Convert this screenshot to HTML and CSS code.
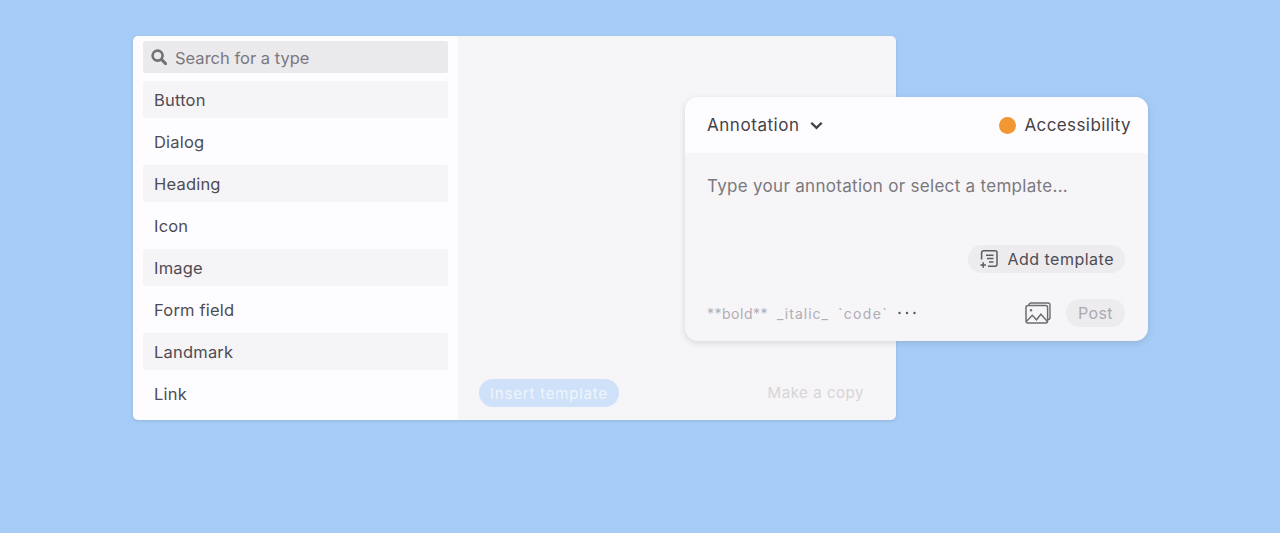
FILE: index.html
```html
<!DOCTYPE html>
<html lang="en">
<head>
<meta charset="utf-8">
<title>Annotation</title>
<link rel="stylesheet" href="styles.css">
</head>
<body>
<main class="stage">
  <section class="panel">
    <div class="types">
      <div class="search">
        <svg class="search-icon" viewBox="0 0 16 16" width="16" height="16" aria-hidden="true"><circle cx="6.6" cy="6.6" r="5" fill="none" stroke="#6f6e75" stroke-width="2.6"/><path d="M10.6 10.6 14.6 14.6" stroke="#6f6e75" stroke-width="3" stroke-linecap="round"/></svg>
        <span>Search for a type</span>
      </div>
      <ul class="type-list">
        <li class="type shaded">Button</li>
        <li class="type">Dialog</li>
        <li class="type shaded">Heading</li>
        <li class="type">Icon</li>
        <li class="type shaded">Image</li>
        <li class="type">Form field</li>
        <li class="type shaded">Landmark</li>
        <li class="type">Link</li>
      </ul>
    </div>
    <div class="preview">
      <span class="insert">Insert template</span>
      <span class="copy">Make a copy</span>
    </div>
  </section>

  <section class="card">
    <header class="card-head">
      <div class="kind">
        <span>Annotation</span>
        <svg viewBox="0 0 12 8" width="13" height="9" aria-hidden="true"><path d="M1.2 1.4 6 6.2l4.8-4.8" fill="none" stroke="#3d3c42" stroke-width="2.1"/></svg>
      </div>
      <div class="category"><i class="dot"></i><span>Accessibility</span></div>
    </header>
    <div class="card-body">
      <p class="placeholder">Type your annotation or select a template...</p>
      <div class="template-row">
        <span class="add-template">
          <svg viewBox="0 0 20 20" width="20" height="20" aria-hidden="true"><path d="M2.6 10.5V3.8a2 2 0 0 1 2-2h11.4a2 2 0 0 1 2 2v11.4a2 2 0 0 1-2 2H9" fill="none" stroke="#5a5960" stroke-width="1.5"/><path d="M7 6.2h7.5M8 9.6h6.5M10 13h4.5M4.2 13.2v5.6M1.4 16h5.6" fill="none" stroke="#5a5960" stroke-width="1.5"/></svg>
          <span>Add template</span>
        </span>
      </div>
      <div class="card-foot">
        <div class="markup">
          <span class="md-bold">**bold**</span><span class="md-italic">_italic_</span><span class="md-code">`code`</span>
          <svg viewBox="0 0 20 4" width="20" height="4" aria-hidden="true"><circle cx="2.5" cy="2" r="1.2" fill="#55545a"/><circle cx="10" cy="2" r="1.2" fill="#55545a"/><circle cx="17.5" cy="2" r="1.2" fill="#55545a"/></svg>
        </div>
        <div class="actions">
          <svg viewBox="0 0 26 22" width="26" height="22" aria-hidden="true"><path d="M4 3.2V3a2 2 0 0 1 2-2h17a2 2 0 0 1 2 2v12.5a2 2 0 0 1-2 2h-.3" fill="none" stroke="#6b6a71" stroke-width="1.4"/><rect x="1" y="3.6" width="21.6" height="17.4" rx="2" fill="none" stroke="#6b6a71" stroke-width="1.5"/><circle cx="6" cy="8.2" r="1.2" fill="#6b6a71"/><path d="M1.3 19.5 7.3 13.2l4.2 4.6 4.4-5.6 6.5 7.3" fill="none" stroke="#6b6a71" stroke-width="1.4"/></svg>
          <span class="post">Post</span>
        </div>
      </div>
    </div>
  </section>
</main>
</body>
</html>
```
FILE: styles.css
```css
* { box-sizing: border-box; }
html, body { margin: 0; height: 100%; }
body {
  background: #a4ccf7;
  font-family: Inter, "Liberation Sans", sans-serif;
  color: #3f3e44;
  overflow: hidden;
}
.stage {
  position: relative;
  width: 1280px;
  height: 533px;
  padding: 36px 384px 0 133px;
}
.stage::after {
  content: "";
  position: absolute;
  inset: 0;
  pointer-events: none;
  background: repeating-conic-gradient(rgba(255, 255, 255, .04) 0 25%, rgba(90, 80, 110, .012) 0 50%) 0 0 / 2px 2px;
}
.panel {
  display: flex;
  width: 763px;
  height: 384px;
  border-radius: 5px;
  overflow: hidden;
  box-shadow: 0 1px 3px rgba(60, 80, 120, .18);
}
.types {
  width: 325px;
  padding: 5px 10px 0;
  background: #fefdff;
}
.search {
  display: flex;
  align-items: center;
  gap: 8px;
  height: 32px;
  padding: 1px 8px 0;
  border-radius: 2px;
  background: #ebeaec;
  font-size: 16.5px;
  color: #77767c;
}
.search-icon { flex: none; margin-top: -1px; }
.type-list {
  list-style: none;
  margin: 8px 0 0;
  padding: 0;
  display: flex;
  flex-direction: column;
  gap: 5px;
}
.type {
  height: 37px;
  padding: 0 11px;
  display: flex;
  align-items: center;
  border-radius: 2px;
  font-size: 16.5px;
  letter-spacing: .2px;
  color: #4a494f;
}
.shaded { background: #f6f5f7; }
.preview {
  flex: 1;
  display: flex;
  align-items: flex-end;
  justify-content: space-between;
  padding: 0 32px 13px 21px;
  background: #f7f6f8;
}
.insert {
  display: flex;
  align-items: center;
  height: 28px;
  padding: 0 11px;
  border-radius: 14px;
  background: #cfe2fa;
  color: #f1f6fd;
  font-size: 15px;
  letter-spacing: .8px;
}
.copy {
  height: 28px;
  line-height: 28px;
  font-size: 15px;
  letter-spacing: .55px;
  color: #d6d5d9;
}
.card {
  position: absolute;
  left: 685px;
  top: 97px;
  width: 463px;
  height: 244px;
  border-radius: 13px;
  overflow: hidden;
  background: #f7f6f8;
  box-shadow: 0 2px 6px rgba(60, 70, 100, .18);
}
.card-head {
  display: flex;
  justify-content: space-between;
  align-items: center;
  height: 56px;
  padding: 0 17px 0 22px;
  background: #fefdff;
  font-size: 17px;
}
.kind { display: flex; align-items: center; gap: 10px; letter-spacing: .55px; }
.category { display: flex; align-items: center; gap: 8px; letter-spacing: .4px; }
.dot {
  width: 17px;
  height: 17px;
  border-radius: 50%;
  background: #f4952f;
}
.card-body { padding: 23px 23px 0 22px; }
.placeholder {
  margin: 0;
  font-size: 17px;
  line-height: 20px;
  letter-spacing: .3px;
  color: #77767c;
}
.template-row {
  display: flex;
  justify-content: flex-end;
  margin-top: 49px;
}
.add-template {
  display: flex;
  align-items: center;
  gap: 8px;
  height: 28px;
  padding: 0 11px;
  border-radius: 14px;
  background: #edecee;
  font-size: 16px;
  letter-spacing: .5px;
  color: #4a4950;
}
.card-foot {
  display: flex;
  justify-content: space-between;
  align-items: center;
  margin-top: 26px;
}
.markup {
  display: flex;
  align-items: center;
  gap: 9px;
  font-size: 14px;
  color: #aeadb2;
}
.md-bold { letter-spacing: .5px; }
.md-italic { letter-spacing: 1px; }
.md-code { letter-spacing: 1.35px; }
.actions { display: flex; align-items: center; gap: 15px; }
.post {
  display: flex;
  align-items: center;
  height: 28px;
  padding: 0 12px;
  border-radius: 14px;
  background: #edecee;
  color: #a9a8ad;
  font-size: 16px;
  letter-spacing: .4px;
}
```
